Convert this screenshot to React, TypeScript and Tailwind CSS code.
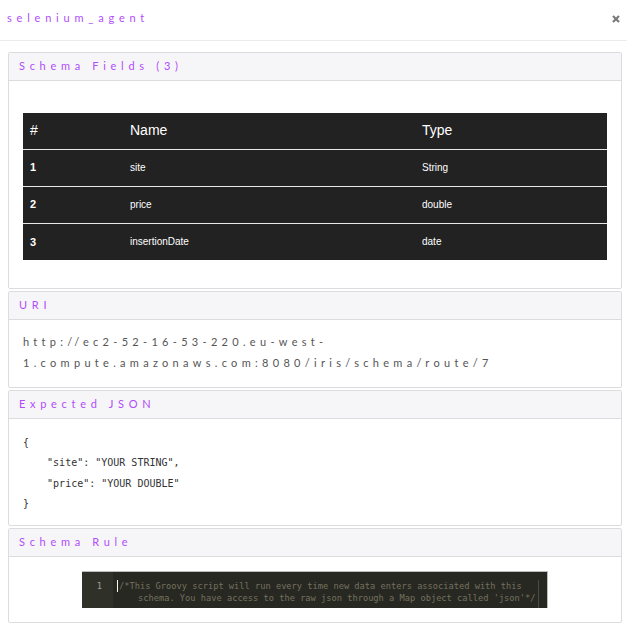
import React from 'react'

const fields = [
  { id: 1, name: 'site', type: 'String' },
  { id: 2, name: 'price', type: 'double' },
  { id: 3, name: 'insertionDate', type: 'date' },
]

function Panel({ title, children }: { title: string; children: React.ReactNode }) {
  return (
    <section className="mt-[2px] rounded-[2px] border border-[#dcdcdf] bg-white first:mt-0">
      <header className="flex h-[28px] items-center border-b border-[#dcdcdf] bg-[#f6f6f8] pl-[10px]">
        <h3 className="text-[11px] font-normal tracking-[4.7px] text-[#b14cfb] [font-family:Lato,'Open_Sans',sans-serif]">
          {title}
        </h3>
      </header>
      {children}
    </section>
  )
}

export default function App() {
  return (
    <div className="min-h-[631px] w-[627px] bg-white">
      <div className="flex h-[41px] items-center justify-between border-b border-[#ececec] pl-[7px] pr-[6px] pb-[3px]">
        <h1 className="text-[11px] font-normal tracking-[4.8px] text-[#b14cfb] [font-family:Lato,sans-serif]">
          selenium_agent
        </h1>
        <button className="flex h-[10px] w-[10px] items-center justify-center" aria-label="close">
          <svg width="8" height="8" viewBox="0 0 8 8">
            <path d="M1 1 L7 7 M7 1 L1 7" stroke="#7a7a7a" strokeWidth="2.2" />
          </svg>
        </button>
      </div>

      <div className="ml-[8px] mr-[5px] mt-[11px]">
        <Panel title="Schema Fields (3)">
          <div className="px-[14px] pt-[32px] pb-[28px]">
            <table className="w-full border-collapse bg-[#222222] text-left text-white [font-family:'Liberation_Sans',Arial,sans-serif]">
              <thead>
                <tr className="h-[36px] text-[14px]">
                  <th className="w-[107px] pl-[7px] font-normal">#</th>
                  <th className="w-[292px] font-normal">Name</th>
                  <th className="font-normal">Type</th>
                </tr>
              </thead>
              <tbody>
                {fields.map((f) => (
                  <tr key={f.id} className="h-[37px] border-t border-[#e8e8e8] text-[10px]">
                    <td className="pl-[7px] text-[11px] font-bold">{f.id}</td>
                    <td>{f.name}</td>
                    <td>{f.type}</td>
                  </tr>
                ))}
              </tbody>
            </table>
          </div>
        </Panel>

        <Panel title="URI">
          <p className="px-[14px] pt-[11px] pb-[14px] text-[11px] leading-[21px] tracking-[4.3px] text-[#555] [font-family:Lato,sans-serif]">
            http://ec2-52-16-53-220.eu-west-1.compute.amazonaws.com:8080/iris/schema/route/7
          </p>
        </Panel>

        <Panel title="Expected JSON">
          <pre className="px-[14px] pt-[14px] pb-[11px] text-[10px] leading-[20.3px] text-[#333] [font-family:'DejaVu_Sans_Mono',monospace]">
{`{
    "site": "YOUR STRING",
    "price": "YOUR DOUBLE"
}`}
          </pre>
        </Panel>

        <Panel title="Schema Rule">
          <div className="flex justify-center pt-[14px] pb-[14px]">
            <div className="flex h-[37px] w-[466px] border-t border-r border-[#bdbdbd] bg-[#272822] text-[8.7px] leading-[12px] text-[#75715e] [font-family:'DejaVu_Sans_Mono',monospace]">
              <div className="w-[31px] shrink-0 bg-[#2f3129] pt-[8px] pr-[11px] text-right text-[#a0a198]">1</div>
              <div className="relative flex-1 pt-[8px] pl-[4px]">
                <span className="absolute left-[4px] top-[8px] h-[12px] w-px bg-[#f8f8f0]" />
                <span className="absolute left-[425px] top-[8px] bottom-0 w-px bg-[#4a4b44]" />
                <div className="pl-[2px]">/*This Groovy script will run every time new data enters associated with this</div>
                <div className="pl-[21px]">schema. You have access to the raw json through a Map object called 'json'*/</div>
              </div>
            </div>
          </div>
        </Panel>
      </div>
    </div>
  )
}
